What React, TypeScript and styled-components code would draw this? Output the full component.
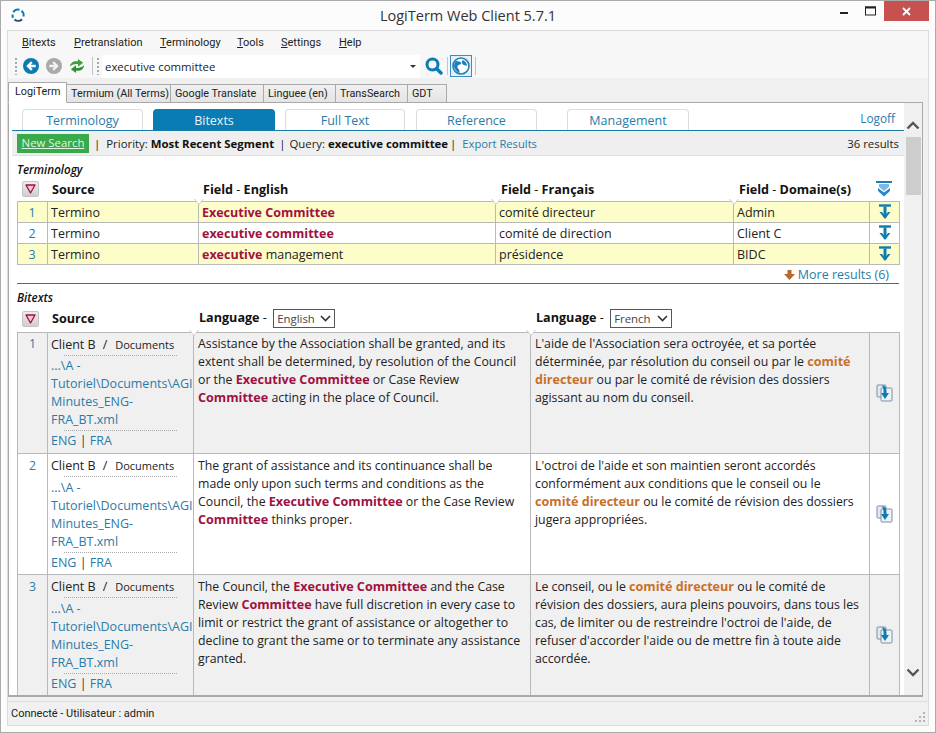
import React from "react";
import styled, { createGlobalStyle } from "styled-components";

const FONT = `"Open Sans", "Noto Sans", "Liberation Sans", sans-serif`;
const SMALL_FONT = `Roboto, "Open Sans", sans-serif`;
const LINK = "#2b7ba8";
const BORDER = "#b9b9b9";

const Global = createGlobalStyle`
  html, body { margin: 0; padding: 0; background: #fbfbfb; overflow: hidden; }
  * { box-sizing: border-box; }
`;

const Win = styled.div`
  width: 936px;
  height: 733px;
  border: 1px solid #ababab;
  background: #fcfcfc;
  font-family: ${FONT};
  font-size: 12px;
  color: #222;
  display: flex;
  flex-direction: column;
  overflow: hidden;
`;

const TitleBar = styled.div`
  height: 29px;
  flex: none;
  display: flex;
  align-items: flex-start;
  position: relative;
`;

const Logo = styled.svg`
  margin: 6px 0 0 9px;
`;

const Title = styled.div`
  position: absolute;
  left: 0;
  right: 0;
  top: 4px;
  text-align: center;
  font-size: 14.5px;
  line-height: 22px;
  color: #333;
`;

const WinButtons = styled.div`
  margin-left: auto;
  margin-right: 6px;
  display: flex;
  align-items: flex-start;
`;

const WinBtn = styled.div`
  width: 27px;
  height: 20px;
  display: flex;
  align-items: center;
  justify-content: center;
`;

const CloseBtn = styled(WinBtn)`
  width: 45px;
  background: #c75050;
`;

const Client = styled.div`
  flex: 1;
  min-height: 0;
  margin: 0 6px 6px 6px;
  border: 1px solid #dadada;
  background: #f0f0f0;
  display: flex;
  flex-direction: column;
`;

const MenuBar = styled.div`
  height: 23px;
  flex: none;
  display: flex;
  align-items: center;
  padding: 0 0 0 14px;
  background: #f7f7f7;
  font-family: ${SMALL_FONT};
  font-size: 11px;
`;

const MenuItem = styled.span<{ $w: number }>`
  width: ${(p) => p.$w}px;
  u { text-underline-offset: 1px; }
`;

const ToolBar = styled.div`
  height: 24px;
  flex: none;
  display: flex;
  align-items: center;
  padding-left: 7px;
  background: #f7f7f7;
`;

const Grip = styled.div<{ $gap: number }>`
  width: 2px;
  height: 17px;
  margin-right: ${(p) => p.$gap}px;
  background: repeating-linear-gradient(to bottom, #a8a8a8 0 2px, transparent 2px 4px);
`;

const ToolIcon = styled.svg<{ $side?: number; $end?: number }>`
  display: block;
  flex: none;
  margin-right: ${(p) => p.$end ?? 7}px;
  margin-left: ${(p) => p.$side ?? 0}px;
`;

const ToolSep = styled.div<{ $gap: number }>`
  width: 1px;
  height: 18px;
  background: #c4c4c4;
  margin-right: ${(p) => p.$gap}px;
`;

const SearchBox = styled.div`
  width: 318px;
  height: 23px;
  background: #fff;
  display: flex;
  align-items: center;
  justify-content: space-between;
  padding: 0 4px 0 3px;
  margin-left: -2px;
  font-size: 11.4px;
`;

const Caret = styled.span`
  width: 0;
  height: 0;
  border-left: 3px solid transparent;
  border-right: 3px solid transparent;
  border-top: 3px solid #333;
`;

const GlobeBox = styled.div`
  width: 22px;
  height: 22px;
  border: 1px solid #3b8cc4;
  background: #e4f1fa;
  display: flex;
  align-items: center;
  justify-content: center;
  margin-right: 3px;
`;

const BrowserTabs = styled.div`
  height: 24px;
  flex: none;
  display: flex;
  align-items: flex-end;
  padding: 2px 0 0 0;
  background: #f0f0f0;
  position: relative;
  z-index: 1;
`;

const BrowserTab = styled.div<{ $w: number; $active?: boolean }>`
  width: ${(p) => p.$w}px;
  height: ${(p) => (p.$active ? 21 : 19)}px;
  border: 1px solid #a9a9a9;
  border-left-width: ${(p) => (p.$active ? 1 : 0)}px;
  border-bottom: ${(p) => (p.$active ? "1px solid #fff" : "1px solid #a9a9a9")};
  background: ${(p) => (p.$active ? "#fff" : "linear-gradient(#f0f0f0, #e4e4e4)")};
  font-family: ${SMALL_FONT};
  font-size: 10.8px;
  line-height: 17px;
  padding-left: ${(p) => (p.$active ? 6 : 4)}px;
  white-space: nowrap;
  margin-bottom: -1px;
`;

const Panel = styled.div`
  width: 915px;
  height: 595px;
  flex: none;
  border: 1px solid #a9a9a9;
  border-bottom-width: 2px;
  background: #fff;
  display: flex;
  overflow: hidden;
`;

const Main = styled.div`
  width: 895px;
  flex: none;
  padding-left: 3px;
  overflow: hidden;
`;

const TabStrip = styled.div`
  height: 28px;
  display: flex;
  align-items: flex-end;
  padding: 0 0 0 10px;
  border-bottom: 1px solid #1a7aa8;
  position: relative;
`;

const ModuleTab = styled.div<{ $w: number; $gap: number; $active?: boolean }>`
  width: ${(p) => p.$w}px;
  margin-right: ${(p) => p.$gap}px;
  height: 21px;
  border: 1px solid ${(p) => (p.$active ? "#0a7cb4" : "#dcdcdc")};
  border-bottom: 0;
  border-radius: 4px 4px 0 0;
  background: ${(p) => (p.$active ? "#0a7cb4" : "#fff")};
  color: ${(p) => (p.$active ? "#e8f4fa" : LINK)};
  text-align: center;
  font-size: 12.5px;
  line-height: 21px;
`;

const Logoff = styled.a`
  position: absolute;
  right: 9px;
  top: 7px;
  color: ${LINK};
  font-size: 11.8px;
`;

const InfoBar = styled.div`
  height: 25px;
  display: flex;
  align-items: center;
  background: #efefef;
  border-bottom: 1px solid #dedede;
  padding: 0 5px 0 5px;
  font-size: 11.4px;
  color: #222;
  b { font-weight: 700; color: #111; }
`;

const NewSearch = styled.a`
  width: 72px;
  height: 19px;
  background: #39aa4a;
  color: #dff5e2;
  text-decoration: underline;
  text-align: center;
  line-height: 18px;
  margin-right: 5px;
`;

const Pipe = styled.span<{ $l: number; $r: number }>`
  margin: 0 ${(p) => p.$r}px 0 ${(p) => p.$l}px;
`;

const InfoLink = styled.span`
  color: ${LINK};
  font-size: 11.2px;
`;

const ResultCount = styled.span`
  margin-left: auto;
`;

const Section = styled.div`
  padding: 0 5px;
`;

const SectionTitle = styled.div`
  font-style: italic;
  font-weight: 600;
  font-size: 11.6px;
  line-height: 14px;
  margin-top: 7px;
  color: #111;
`;

const HeaderRow = styled.div<{ $cols: string; $h: number }>`
  display: grid;
  grid-template-columns: ${(p) => p.$cols};
  height: ${(p) => p.$h}px;
  align-items: center;
  font-weight: 700;
  font-size: 12.6px;
  color: #111;
`;

const HeadLabel = styled.span<{ $pad: number }>`
  padding-left: ${(p) => p.$pad}px;
  white-space: nowrap;
  i { font-style: normal; font-weight: 400; }
`;

const CollapseBtn = styled.div`
  width: 17px;
  height: 16px;
  margin-left: 5px;
  background: linear-gradient(#ececec, #cfcfcf);
  border: 1px solid #c4c4c4;
  border-radius: 2px;
  display: flex;
  align-items: center;
  justify-content: center;
`;

const LangSelect = styled.span`
  display: inline-flex;
  align-items: center;
  justify-content: space-between;
  width: 62px;
  height: 19px;
  border: 1px solid #555;
  margin-left: 3px;
  padding: 0 3px 0 3px;
  font-weight: 400;
  font-size: 11.4px;
  color: #444;
  vertical-align: middle;
`;

const Table = styled.table`
  border-collapse: collapse;
  table-layout: fixed;
  width: 882px;
  border: 1px solid ${BORDER};
`;

const Cell = styled.td<{ $center?: boolean }>`
  border: 1px solid ${BORDER};
  position: relative;
  padding: 0 4px 0 3px;
  font-size: 12.5px;
  color: #222;
  text-align: ${(p) => (p.$center ? "center" : "left")};
  white-space: nowrap;
`;

const TermRow = styled.tr<{ $alt?: boolean }>`
  height: 21px;
  background: ${(p) => (p.$alt ? "#fff" : "#fdfdc9")};
`;

const Num = styled.span`
  color: ${LINK};
`;

const Marker = styled.span`
  position: absolute;
  top: -3px;
  left: -5px;
  width: 0;
  height: 0;
  border-left: 5px solid transparent;
  border-right: 5px solid transparent;
  border-top: 6px solid #c9c9c9;
  z-index: 2;
  &::after {
    content: "";
    position: absolute;
    left: -4px;
    top: -6px;
    border-left: 4px solid transparent;
    border-right: 4px solid transparent;
    border-top: 5px solid #fff;
  }
`;

const Hit = styled.b`
  color: #a01040;
  font-weight: 700;
`;

const FrHit = styled.b`
  color: #c8702a;
  font-weight: 700;
`;

const MoreRow = styled.div`
  height: 19px;
  display: flex;
  align-items: center;
  justify-content: flex-end;
  gap: 3px;
  padding: 1px 10px 0 0;
  border-bottom: 1px solid #1a7aa8;
  color: ${LINK};
  font-size: 12.5px;
`;

const BiRow = styled.tr<{ $alt?: boolean }>`
  height: 121px;
  background: ${(p) => (p.$alt ? "#fff" : "#f0f0f0")};
`;

const BiCell = styled(Cell)<{ $top: number }>`
  vertical-align: top;
  line-height: 18px;
  font-size: 12.3px;
  padding: ${(p) => p.$top}px 4px 2px;
  b { font-size: 12.6px; }
`;

const NumCell = styled(BiCell)`
  text-align: center;
`;

const IconCell = styled(Cell)`
  vertical-align: middle;
  text-align: center;
  padding: 0;
`;

const SourceCell = styled(BiCell)`
  padding: 3px 0 0 3px;
  overflow: hidden;
  font-size: 12.5px;
`;

const SourceTop = styled.div`
  line-height: 18px;
  white-space: nowrap;
  small { font-size: 11px; }
  i { font-style: normal; margin: 0 8px 0 7px; }
`;

const Dotted = styled.div<{ $after: number }>`
  width: 113px;
  margin: 1px 0 ${(p) => p.$after}px 13px;
  border-top: 1px dotted #aaa;
`;

const PathLink = styled.div`
  color: ${LINK};
  line-height: 18px;
  span { display: block; white-space: nowrap; }
`;

const LangLinks = styled.div`
  color: ${LINK};
  line-height: 19px;
  i { font-style: normal; color: #333; }
`;

const Scroll = styled.div`
  width: 18px;
  flex: none;
  background: #f0f0f0;
  display: flex;
  flex-direction: column;
  align-items: center;
  padding-top: 18px;
`;

const Thumb = styled.div`
  width: 15px;
  height: 58px;
  margin-top: 7px;
  background: #cdcdcd;
`;

const ScrollDown = styled.svg`
  margin-top: auto;
  margin-bottom: 18px;
`;

const Status = styled.div`
  flex: 1;
  margin-top: 4px;
  border-top: 1px solid #dcdcdc;
  display: flex;
  align-items: center;
  padding-left: 3px;
  font-family: ${SMALL_FONT};
  font-size: 11px;
  position: relative;
`;

const ResizeGrip = styled.svg`
  position: absolute;
  right: 2px;
  bottom: 2px;
`;

const CenteredIcon = styled.svg`
  display: block;
  margin: 0 auto;
`;

const Back = () => (
  <ToolIcon width="16" height="16" viewBox="0 0 16 16">
    <circle cx="8" cy="8" r="8" fill="#0a7cb4" />
    <path d="M8 3.300 3.300 8 8 12.700l1.700-1.700-2-1.800h5V6.800h-5l2-1.800z" fill="#fff" />
  </ToolIcon>
);

const Forward = () => (
  <ToolIcon width="16" height="16" viewBox="0 0 16 16">
    <circle cx="8" cy="8" r="8" fill="#a9a9a9" />
    <path d="M8 3.300 12.700 8 8 12.700 6.300 11l2-1.800h-5V6.800h5l-2-1.800z" fill="#f2f2f2" />
  </ToolIcon>
);

const Refresh = () => (
  <ToolIcon width="16" height="16" viewBox="0 0 17 16">
    <path d="M1 8.500C1.300 4.500 5 2.200 9.500 3V.5L15 4.500 9.500 8.800V6C6.500 5.600 3.800 6.300 1 8.500z" fill="#3d9f3c" />
    <path d="M16 7.500C15.700 11.500 12 13.800 7.500 13v2.500L2 11.500l5.500-4.300V10c3 .4 5.700-.3 8.500-2.500z" fill="#2f8f33" />
  </ToolIcon>
);

const SearchIcon = () => (
  <ToolIcon $side={5} $end={4} width="18" height="18" viewBox="0 0 18 18">
    <circle cx="7.500" cy="7.500" r="5.500" fill="none" stroke="#0a7cb4" strokeWidth="3" />
    <path d="M11.500 11.500 16 16" stroke="#0a7cb4" strokeWidth="3.400" strokeLinecap="round" />
  </ToolIcon>
);

const Globe = () => (
  <svg width="18" height="18" viewBox="0 0 18 18">
    <circle cx="9" cy="9" r="8" fill="#fff" stroke="#1f7fb8" strokeWidth="1.600" />
    <path d="M4 4c2 .5 4 0 5 1.500s-1 2-2.500 2.500S5 11 6.500 12 7 15 8 16C5 15 2 12 2 9c0-2 1-4 2-5zM11 3c2 1 4 3 4 6-1 0-2-1-3-1s-1.500-1-2-2 0-2 1-3z" fill="#1f7fb8" />
  </svg>
);

const DownTo = () => (
  <CenteredIcon width="16" height="17" viewBox="0 0 16 17">
    <path d="M2 1.500h12" stroke="#0f7cb0" strokeWidth="2.400" />
    <path d="M8 2.500v11" stroke="#0f7cb0" strokeWidth="3" />
    <path d="M2.500 8 8 15l5.500-7-2.500 0L8 11.500 5 8z" fill="#0f7cb0" />
  </CenteredIcon>
);

const DoubleDown = () => (
  <CenteredIcon width="18" height="16" viewBox="0 0 18 16">
    <path d="M1 1h16" stroke="#1a7fb5" strokeWidth="2" />
    <path d="M4 3h10v3l-5 4-5-4z" fill="#7db8e6" />
    <path d="M3 7l6 4.500L15 7v3l-6 5.500L3 10z" fill="#2a86c4" />
  </CenteredIcon>
);

const Toggle = () => (
  <svg width="11" height="10" viewBox="0 0 11 10">
    <path d="M1 1h9L5.500 9z" fill="#f7c6d4" stroke="#a01040" strokeWidth="1.300" strokeLinejoin="round" />
  </svg>
);

const ExportDoc = () => (
  <CenteredIcon width="17" height="18" viewBox="0 0 17 18">
    <rect x="1" y="1" width="9" height="12" rx="1" fill="#dfeaf5" stroke="#7d8fa3" />
    <rect x="5" y="4" width="11" height="13" rx="1" fill="#eef3f8" stroke="#7d8fa3" />
    <path d="M6 1.500c3 0 4.500 1.500 4.500 5V9H13l-4 6-4-6h2.500V6.500C7.500 4.500 7 3 6 1.500z" fill="#0f7cb0" />
  </CenteredIcon>
);

const SelectArrow = () => (
  <svg width="11" height="7" viewBox="0 0 11 7">
    <path d="M1 1l4.500 4.500L10 1" fill="none" stroke="#333" strokeWidth="1.600" />
  </svg>
);

const termRows = [
  { n: 1, en: <Hit>Executive Committee</Hit>, fr: "comité directeur", dom: "Admin" },
  { n: 2, en: <Hit>executive committee</Hit>, fr: "comité de direction", dom: "Client C", alt: true },
  { n: 3, en: <><Hit>executive</Hit> management</>, fr: "présidence", dom: "BIDC" },
];

const biRows = [
  {
    n: 1,
    en: <>Assistance by the Association shall be granted, and its<br />extent shall be determined, by resolution of the Council<br />or the <Hit>Executive Committee</Hit> or Case Review<br /><Hit>Committee</Hit> acting in the place of Council.</>,
    fr: <>L'aide de l'Association sera octroyée, et sa portée<br />déterminée, par résolution du conseil ou par le <FrHit>comité</FrHit><br /><FrHit>directeur</FrHit> ou par le comité de révision des dossiers<br />agissant au nom du conseil.</>,
  },
  {
    n: 2,
    alt: true,
    en: <>The grant of assistance and its continuance shall be<br />made only upon such terms and conditions as the<br />Council, the <Hit>Executive Committee</Hit> or the Case Review<br /><Hit>Committee</Hit> thinks proper.</>,
    fr: <>L'octroi de l'aide et son maintien seront accordés<br />conformément aux conditions que le conseil ou le<br /><FrHit>comité directeur</FrHit> ou le comité de révision des dossiers<br />jugera appropriées.</>,
  },
  {
    n: 3,
    en: <>The Council, the <Hit>Executive Committee</Hit> and the Case<br />Review <Hit>Committee</Hit> have full discretion in every case to<br />limit or restrict the grant of assistance or altogether to<br />decline to grant the same or to terminate any assistance<br />granted.</>,
    fr: <>Le conseil, ou le <FrHit>comité directeur</FrHit> ou le comité de<br />révision des dossiers, aura pleins pouvoirs, dans tous les<br />cas, de limiter ou de restreindre l'octroi de l'aide, de<br />refuser d'accorder l'aide ou de mettre fin à toute aide<br />accordée.</>,
  },
];

export default function App() {
  return (
    <>
      <Global />
      <Win>
        <TitleBar>
          <Logo width="16" height="16" viewBox="0 0 16 16">
            <path d="M3.300 5.200A5.500 5.500 0 0 1 9.500 2.700" fill="none" stroke="#0a7cb4" strokeWidth="2" />
            <path d="M11.500 3.800A5.500 5.500 0 0 1 13.400 9.500" fill="none" stroke="#0a7cb4" strokeWidth="2" />
            <path d="M12 12.200A5.500 5.500 0 0 1 4.500 12.500" fill="none" stroke="#1f4f7a" strokeWidth="2" />
            <path d="M3.200 10.800A5.500 5.500 0 0 1 2.500 7.500" fill="none" stroke="#0a7cb4" strokeWidth="2" />
          </Logo>
          <Title>LogiTerm Web Client 5.7.1</Title>
          <WinButtons>
            <WinBtn>
              <svg width="10" height="10" viewBox="0 0 10 10"><path d="M1 7h8" stroke="#222" strokeWidth="2" /></svg>
            </WinBtn>
            <WinBtn>
              <svg width="11" height="10" viewBox="0 0 11 10"><rect x=".5" y="1" width="10" height="8" fill="none" stroke="#222" /><path d="M0 1.500h11" stroke="#222" strokeWidth="2" /></svg>
            </WinBtn>
            <CloseBtn>
              <svg width="9" height="9" viewBox="0 0 9 9"><path d="M1 1l7 7M8 1 1 8" stroke="#fff" strokeWidth="1.800" /></svg>
            </CloseBtn>
          </WinButtons>
        </TitleBar>
        <Client>
          <MenuBar>
            <MenuItem $w={52}><u>B</u>itexts</MenuItem>
            <MenuItem $w={86}><u>P</u>retranslation</MenuItem>
            <MenuItem $w={77}><u>T</u>erminology</MenuItem>
            <MenuItem $w={44}><u>T</u>ools</MenuItem>
            <MenuItem $w={58}><u>S</u>ettings</MenuItem>
            <MenuItem $w={30}><u>H</u>elp</MenuItem>
          </MenuBar>
          <ToolBar>
            <Grip $gap={6} />
            <Back />
            <Forward />
            <Refresh />
            <ToolSep $gap={4} />
            <Grip $gap={5} />
            <SearchBox>
              executive committee
              <Caret />
            </SearchBox>
            <SearchIcon />
            <ToolSep $gap={2} />
            <GlobeBox><Globe /></GlobeBox>
            <ToolSep $gap={0} />
          </ToolBar>
          <BrowserTabs>
            <BrowserTab $w={59} $active>LogiTerm</BrowserTab>
            <BrowserTab $w={104}>Termium (All Terms)</BrowserTab>
            <BrowserTab $w={93}>Google Translate</BrowserTab>
            <BrowserTab $w={72}>Linguee (en)</BrowserTab>
            <BrowserTab $w={72}>TransSearch</BrowserTab>
            <BrowserTab $w={39}>GDT</BrowserTab>
          </BrowserTabs>
          <Panel>
            <Main>
              <TabStrip>
                <ModuleTab $w={121} $gap={10}>Terminology</ModuleTab>
                <ModuleTab $w={122} $gap={10} $active>Bitexts</ModuleTab>
                <ModuleTab $w={120} $gap={11}>Full Text</ModuleTab>
                <ModuleTab $w={121} $gap={30}>Reference</ModuleTab>
                <ModuleTab $w={122} $gap={0}>Management</ModuleTab>
                <Logoff>Logoff</Logoff>
              </TabStrip>
              <InfoBar>
                <NewSearch>New Search</NewSearch>
                <Pipe $l={0} $r={6}>|</Pipe>Priority:&nbsp;<b>Most Recent Segment</b>
                <Pipe $l={5} $r={4}>|</Pipe>Query:&nbsp;<b>executive committee</b>
                <Pipe $l={2} $r={6}>|</Pipe><InfoLink>Export Results</InfoLink>
                <ResultCount>36 results</ResultCount>
              </InfoBar>
              <Section>
                <SectionTitle>Terminology</SectionTitle>
                <HeaderRow $cols="30px 151px 297px 238px 136px 30px" $h={24}>
                  <CollapseBtn><Toggle /></CollapseBtn>
                  <HeadLabel $pad={5}>Source</HeadLabel>
                  <HeadLabel $pad={5}>Field <i>-</i> English</HeadLabel>
                  <HeadLabel $pad={6}>Field <i>-</i> Français</HeadLabel>
                  <HeadLabel $pad={6}>Field <i>-</i> Domaine(s)</HeadLabel>
                  <DoubleDown />
                </HeaderRow>
                <Table>
                  <colgroup>
                    <col width="30" /><col width="151" /><col width="297" /><col width="238" /><col width="136" /><col width="30" />
                  </colgroup>
                  <tbody>
                    {termRows.map((r) => (
                      <TermRow key={r.n} $alt={r.alt}>
                        <Cell $center><Num>{r.n}</Num></Cell>
                        <Cell>Termino</Cell>
                        <Cell>{r.n === 1 && <Marker />}{r.en}</Cell>
                        <Cell>{r.n === 1 && <Marker />}{r.fr}</Cell>
                        <Cell>{r.n === 1 && <Marker />}{r.dom}</Cell>
                        <IconCell><DownTo /></IconCell>
                      </TermRow>
                    ))}
                  </tbody>
                </Table>
                <MoreRow>
                  <svg width="11" height="10" viewBox="0 0 11 10"><path d="M3.500 0h4v4H11L5.500 10 0 4h3.500z" fill="#b9682c" /></svg>
                  More results (6)
                </MoreRow>
                <SectionTitle>Bitexts</SectionTitle>
                <HeaderRow $cols="30px 146px 337px 339px 30px" $h={27}>
                  <CollapseBtn><Toggle /></CollapseBtn>
                  <HeadLabel $pad={5}>Source</HeadLabel>
                  <HeadLabel $pad={6}>Language <i>-</i> <LangSelect>English<SelectArrow /></LangSelect></HeadLabel>
                  <HeadLabel $pad={6}>Language <i>-</i> <LangSelect>French<SelectArrow /></LangSelect></HeadLabel>
                  <span />
                </HeaderRow>
                <Table>
                  <colgroup>
                    <col width="30" /><col width="146" /><col width="337" /><col width="339" /><col width="30" />
                  </colgroup>
                  <tbody>
                    {biRows.map((r) => {
                      const top = r.n === 1 ? 2 : 3;
                      return (
                        <BiRow key={r.n} $alt={r.alt}>
                          <NumCell $top={top}><Num>{r.n}</Num></NumCell>
                          <SourceCell $top={3}>
                            <SourceTop>Client B<i>/</i><small>Documents</small></SourceTop>
                            <Dotted $after={top - 1} />
                            <PathLink>
                              <span>...\A -</span>
                              <span>Tutoriel\Documents\AGI</span>
                              <span>Minutes_ENG-</span>
                              <span>FRA_BT.xml</span>
                            </PathLink>
                            <Dotted $after={0} />
                            <LangLinks>ENG <i>|</i> FRA</LangLinks>
                          </SourceCell>
                          <BiCell $top={top}>{r.n === 1 && <Marker />}{r.en}</BiCell>
                          <BiCell $top={top}>{r.n === 1 && <Marker />}{r.fr}</BiCell>
                          <IconCell><ExportDoc /></IconCell>
                        </BiRow>
                      );
                    })}
                  </tbody>
                </Table>
              </Section>
            </Main>
            <Scroll>
              <svg width="14" height="9" viewBox="0 0 14 9"><path d="M1.500 7.500 7 2l5.500 5.500" fill="none" stroke="#555" strokeWidth="2.400" /></svg>
              <Thumb />
              <ScrollDown width="14" height="9" viewBox="0 0 14 9"><path d="M1.500 1.500 7 7l5.500-5.500" fill="none" stroke="#555" strokeWidth="2.400" /></ScrollDown>
            </Scroll>
          </Panel>
          <Status>
            Connecté - Utilisateur : admin
            <ResizeGrip width="12" height="12" viewBox="0 0 12 12">
              <path d="M9 1h2v2H9zM5 5h2v2H5zM9 5h2v2H9zM1 9h2v2H1zM5 9h2v2H5zM9 9h2v2H9z" fill="#b5b5b5" />
            </ResizeGrip>
          </Status>
        </Client>
      </Win>
    </>
  );
}
